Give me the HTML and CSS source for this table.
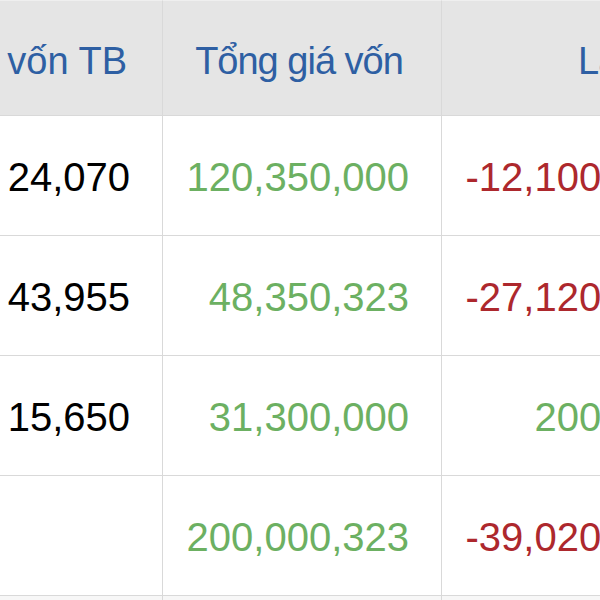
FILE: index.html
```html
<!DOCTYPE html>
<html lang="vi">
<head>
<meta charset="utf-8">
<link rel="stylesheet" href="styles.css">
</head>
<body>
<div class="viewport">
  <table class="grid">
    <colgroup>
      <col class="c-avg">
      <col class="c-total">
      <col class="c-pl">
    </colgroup>
    <thead>
      <tr class="head-row">
        <th class="h-avg">Giá vốn TB</th>
        <th class="h-total">Tổng giá vốn</th>
        <th class="h-pl">Lãi/Lỗ</th>
      </tr>
    </thead>
    <tbody>
      <tr class="row">
        <td class="num">24,070</td>
        <td class="num up">120,350,000</td>
        <td class="num down">-12,100,000</td>
      </tr>
      <tr class="row">
        <td class="num">43,955</td>
        <td class="num up">48,350,323</td>
        <td class="num down">-27,120,000</td>
      </tr>
      <tr class="row">
        <td class="num">15,650</td>
        <td class="num up">31,300,000</td>
        <td class="num up">200,000</td>
      </tr>
      <tr class="row">
        <td class="num"></td>
        <td class="num up">200,000,323</td>
        <td class="num down">-39,020,000</td>
      </tr>
      <tr class="row tail">
        <td></td>
        <td></td>
        <td></td>
      </tr>
    </tbody>
  </table>
</div>
</body>
</html>
```

FILE: styles.css
```css
* {
  box-sizing: border-box;
}

html, body {
  margin: 0;
  padding: 0;
  background: #ffffff;
}

.viewport {
  width: 600px;
  height: 600px;
  overflow: hidden;
  font-family: "Liberation Sans", Arial, sans-serif;
}

.grid {
  table-layout: fixed;
  border-collapse: separate;
  border-spacing: 0;
  margin-left: -137px;
  width: 849px;
}

.c-avg { width: 300px; }
.c-total { width: 279px; }
.c-pl { width: 270px; }

th, td {
  padding: 0;
  border-right: 1px solid #d9d9d9;
  border-bottom: 1px solid #d9d9d9;
  white-space: nowrap;
  vertical-align: middle;
}

.head-row th {
  height: 116px;
  background: #e5e5e5;
  border-top: 1px solid #efefef;
  color: #2e5fa3;
  font-weight: normal;
  font-size: 38px;
  letter-spacing: -1px;
  padding-top: 6px;
}

.head-row .h-avg {
  text-align: right;
  padding-right: 35px;
  letter-spacing: 0;
}

.h-total {
  text-align: center;
  padding-right: 6px;
}

.h-pl {
  text-align: left;
  padding-left: 136px;
}

.row td {
  height: 120px;
}

.num {
  font-size: 40px;
  text-align: right;
  padding-right: 32px;
  color: #000000;
  padding-top: 4px;
}

.num.up {
  color: #6cb062;
}

.num.down {
  color: #ad282d;
}

.tail td {
  background: #f7f7f7;
}
```
